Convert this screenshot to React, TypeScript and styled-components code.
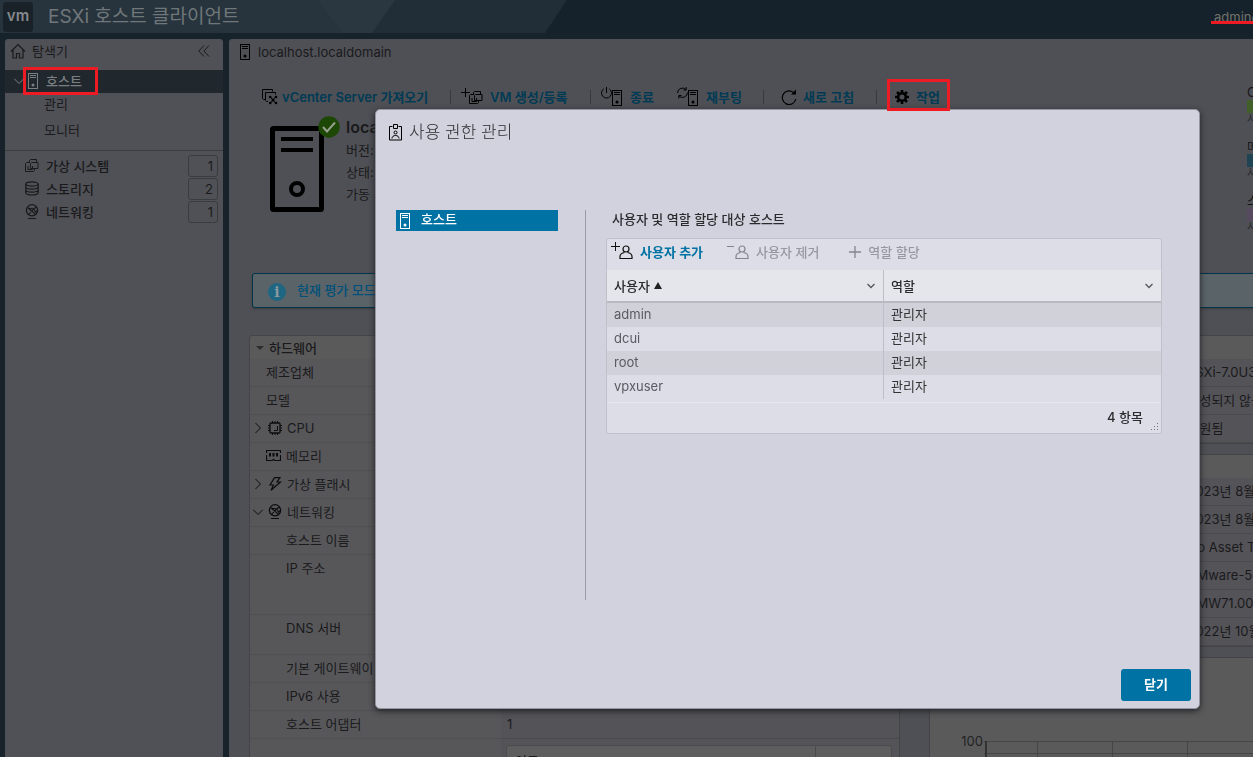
import React from 'react';
import styled, { createGlobalStyle, css } from 'styled-components';

const GlobalStyle = createGlobalStyle`
  * { box-sizing: border-box; }
  html, body, #root { height: 100%; }
  body {
    margin: 0;
    overflow: hidden;
    background: #17222a;
    color: #1a1a1c;
    font: 400 13px/20px Inter, "Noto Sans CJK KR", sans-serif;
  }
  button { font: inherit; color: inherit; background: none; border: 0; padding: 0; text-align: left; cursor: pointer; }
  a { color: inherit; text-decoration: none; }
  h1, h2, h3, p, ul { margin: 0; padding: 0; font-weight: inherit; font-size: inherit; }
  ul { list-style: none; }
  table { border-spacing: 0; }
  svg { display: block; flex: none; }
`;

const RED = '#ed1c24';

/* ---------- icons ---------- */

const Svg = ({ w = 16, h = 16, children }: { w?: number; h?: number; children: React.ReactNode }) => (
  <svg width={w} height={h} viewBox={`0 0 ${w} ${h}`} fill="none" stroke="currentColor" strokeWidth="1" aria-hidden="true">
    {children}
  </svg>
);

const HostShape = () => (
  <g>
    <rect x="0.5" y="0.5" width="9" height="15" />
    <path d="M2 2.500h6M2 4.500h6" />
    <circle cx="5" cy="12" r="1.500" fill="currentColor" stroke="none" />
  </g>
);

const HostIcon = () => (
  <Svg w={11} h={16}><HostShape /></Svg>
);

const HomeIcon = () => (
  <Svg>
    <path d="M1 8.500 8 1.500l7 7M3 7v8h3.500v-4.500h3V15H13V7" strokeWidth="1.200" />
  </Svg>
);

const CollapseIcon = () => (
  <Svg w={12} h={12}>
    <path d="M6 .5.8 6 6 11.500M11 .5 5.800 6l5.200 5.500" />
  </Svg>
);

const Chevron = ({ dir = 'down' }: { dir?: 'down' | 'right' }) => (
  <Svg w={10} h={10}>
    {dir === 'down' ? <path d="M0 2.500 5 7.500l5-5" /> : <path d="M2.500 0 7.500 5l-5 5" />}
  </Svg>
);

const SmallChevron = () => (
  <Svg w={10} h={6}>
    <path d="M1.500 1 5 4.500 8.500 1" strokeWidth="1.300" />
  </Svg>
);

const VmShape = () => (
  <g>
    <path d="M4.500 5V2.500l1-1h6V4" />
    <path d="M9.500 10.500v2l-1 1h-8v-8l1-1h3" />
    <path d="M5.500 10.500v-5l1-1h6.500v6H5.500z" />
    <path d="M3 8v3.500h4.500V8" />
  </g>
);

const VmIcon = () => (
  <Svg w={14} h={15}>
    <VmShape />
  </Svg>
);

const StorageIcon = () => (
  <Svg w={14} h={15}>
    <g strokeWidth="1.200">
      <ellipse cx="7" cy="3" rx="6.200" ry="2.200" />
      <path d="M.8 3v8.800C.8 13 3.500 14 7 14s6.200-1 6.200-2.200V3M.8 6C.8 7.200 3.500 8.200 7 8.200S13.200 7.200 13.200 6M.8 9c0 1.200 2.700 2.200 6.200 2.200s6.200-1 6.200-2.200" />
    </g>
  </Svg>
);

const NetworkIcon = () => (
  <Svg w={14} h={15}>
    <circle cx="7" cy="6.300" r="5.600" strokeWidth="1.300" />
    <path d="M2.500 3.500 9.500 9.500l2.500-3M3.500 10.500 8.500 5l3-2M2.500 4 8.500 5l3 4.500" strokeWidth="1.100" />
    <path d="M3 14.500h8" />
  </Svg>
);

const ImportIcon = () => (
  <Svg>
    <path d="M3 10.500H1.500l-1-1V.5h10v2M6 12.500H4.500l-1-1v-8h10v2" />
    <path d="M8.500 8l5 6M13.500 8l-5 6" />
    <g fill="currentColor" stroke="none">
      <circle cx="8.200" cy="8" r="1.300" /><circle cx="14" cy="8" r="1.300" />
      <circle cx="8.200" cy="14" r="1.300" /><circle cx="14" cy="14" r="1.300" />
      <circle cx="11" cy="11" r="1.500" />
    </g>
  </Svg>
);

const NewVmIcon = () => (
  <Svg w={22} h={18}>
    <path d="M0 4.500h9M4.500 0v9" />
    <g transform="translate(8 2)"><VmShape /></g>
  </Svg>
);

const MiniHost = () => (
  <g transform="translate(11 3)"><HostShape /></g>
);

const ShutdownIcon = () => (
  <Svg w={22} h={20}>
    <path d="M5.500 0v6M2.800 1.800a5 5 0 1 0 5.400 0" />
    <MiniHost />
  </Svg>
);

const RebootIcon = () => (
  <Svg w={22} h={20}>
    <path d="M.5 6a5 5 0 0 1 8.700-3.300V0M9.200 3H6.500M10.500 5.500a5 5 0 0 1-8.700 3.300v2.700M1.800 8.500h2.700" />
    <MiniHost />
  </Svg>
);

const RefreshIcon = () => (
  <Svg>
    <path d="M13.500 4.500A6.800 6.800 0 1 0 14.800 10" strokeWidth="1.200" />
    <path d="M15 .5v5h-5z" fill="currentColor" stroke="none" />
  </Svg>
);

const GearIcon = () => (
  <Svg w={14} h={14}>
    <circle cx="7" cy="7" r="3.800" strokeWidth="2.600" />
    <g strokeWidth="2.600">
      <path d="M7 0v3M7 11v3M0 7h3M11 7h3M2 2l2 2M10 10l2 2M12 2l-2 2M4 10l-2 2" />
    </g>
  </Svg>
);

const BadgeIcon = () => (
  <Svg w={13} h={17}>
    <path d="M3.500 2.500h-3v13.500h12V2.500h-3" />
    <path d="M4.500.5h4v4h-4z" />
    <circle cx="6.500" cy="8.500" r="1.500" />
    <path d="M3 14.500c0-2 1.500-3 3.500-3s3.500 1 3.500 3" />
  </Svg>
);

const UserIcon = ({ sign }: { sign: 'plus' | 'minus' }) => (
  <Svg w={22} h={19}>
    <path d={sign === 'plus' ? 'M0 4.500h9M4.500 0v9' : 'M0 4.500h7'} />
    <circle cx="15" cy="7" r="3" strokeWidth="1.200" />
    <path d="M13.500 10.500c-3 .6-4.500 2-4.500 4v2h12v-2c0-2-1.500-3.400-4.500-4" strokeWidth="1.200" />
  </Svg>
);

const PlusIcon = () => (
  <Svg w={18} h={12}>
    <path d="M6 6h12M12 0v12" strokeWidth="1.300" />
  </Svg>
);

const CpuIcon = () => (
  <Svg w={14} h={14}>
    <rect x="2" y="2" width="10" height="10" rx="1" strokeWidth="1.300" />
    <path d="M9.500 5v4.500H6M4.500 0v2M7 0v2M9.500 0v2M4.500 12v2M7 12v2M9.500 12v2M0 4.500h2M0 7h2M0 9.500h2M12 4.500h2M12 7h2M12 9.500h2" />
  </Svg>
);

const MemoryIcon = () => (
  <Svg w={15} h={11}>
    <path d="M.5 3V.5h14V3M.5 5v5.500H6l1.500-1 1.500 1h5.500V5" strokeWidth="1.200" />
    <path d="M4 3v3.500M7.500 3v3.500M11 3v3.500" strokeWidth="2" />
  </Svg>
);

const FlashIcon = () => (
  <Svg w={14} h={14}>
    <path d="M6.500.7h5.500L9 5h3.500L3 13.300 5.500 8H2z" strokeWidth="1.200" />
  </Svg>
);

/* ---------- shell ---------- */

const Shell = styled.div`
  height: 100vh;
  min-width: 1574px;
  display: flex;
  flex-direction: column;
  overflow: hidden;
`;

const TopBar = styled.header`
  position: relative;
  flex: none;
  height: 39px;
  border-bottom: 6px solid #17232b;
  background: #16222b;
  display: flex;
  align-items: center;
`;

const Facets = styled.svg`
  position: absolute;
  left: 0;
  top: 0;
`;

const Logo = styled.span`
  position: relative;
  width: 30px;
  height: 30px;
  margin: 0 15px 0 3px;
  border-radius: 3px;
  background: #1a2229;
  color: #85898c;
  font: 600 15px/28px Inter, sans-serif;
  text-align: center;
`;

const AppTitle = styled.h1`
  position: relative;
  color: #70777a;
  font-size: 19px;
  line-height: 28px;
`;

const Account = styled.a`
  position: relative;
  width: 360px;
  margin-left: auto;
  color: #74736c;
  line-height: 18px;
  &::after {
    content: '';
    position: absolute;
    left: -3px;
    right: 0;
    bottom: 2px;
    height: 3px;
    background: ${RED};
  }
`;

const Body = styled.div`
  flex: 1;
  min-height: 0;
  display: flex;
  gap: 6px;
  padding: 0 4px 0 5px;
`;

/* ---------- navigator ---------- */

const Navigator = styled.nav`
  flex: none;
  width: 218px;
  border-radius: 3px 3px 0 0;
  background: #505156;
`;

const NavHead = styled.div`
  display: flex;
  align-items: center;
  gap: 6px;
  height: 31px;
  padding: 0 13px 8px 5px;
  button { margin-left: auto; }
`;

const marked = css`
  position: relative;
  &::after {
    content: '';
    position: absolute;
    z-index: 20;
    border: 3px solid ${RED};
    pointer-events: none;
  }
`;

const NavHost = styled.div`
  display: flex;
  align-items: center;
  gap: 4px;
  height: 23px;
  padding: 1px 0 2px 9px;
  background: #20282e;
  color: #7c7f81;
`;

const NavHostLink = styled.a`
  ${marked}
  display: flex;
  align-items: center;
  gap: 7px;
  font-weight: 500;
  &::after { inset: -4px -16px -4px -5px; }
`;

const NavSub = styled.a`
  display: block;
  height: 26px;
  padding-left: 39px;
  line-height: 22px;
`;

const NavSubs = styled.div`
  height: 58px;
  border-bottom: 1px solid #3b3c40;
`;

const NavItems = styled.ul`
  padding: 3px 5px 0 20px;
`;

const NavItem = styled.li`
  display: flex;
  align-items: center;
  gap: 7px;
  height: 23px;
  font-weight: 500;
`;

const Count = styled.span`
  width: 30px;
  height: 22px;
  margin-left: auto;
  padding-right: 4px;
  border: 1px solid #3a3b3f;
  border-radius: 3px;
  font-weight: 400;
  text-align: right;
`;

/* ---------- host page ---------- */

const Main = styled.main`
  flex: 1;
  min-width: 0;
  overflow: hidden;
  border-radius: 3px 3px 0 0;
  background: #4f5055;
`;

const Crumb = styled.div`
  display: flex;
  align-items: center;
  gap: 7px;
  height: 26px;
  padding-left: 11px;
  svg { color: #000; }
`;

const Hero = styled.section`
  display: flex;
  justify-content: space-between;
  height: 208px;
  padding: 18px 20px 0 33px;
`;

const Toolbar = styled.div`
  display: flex;
  height: 28px;
`;

const Tool = styled.button<{ $width: number; $gap?: number; $divided?: boolean; $before?: number }>`
  display: flex;
  align-items: center;
  gap: ${(p) => p.$gap ?? 8}px;
  width: ${(p) => p.$width}px;
  margin-left: ${(p) => p.$before ?? 0}px;
  color: #000;
  white-space: nowrap;
  ${(p) => p.$divided && css`
    background: linear-gradient(#38393d, #38393d) right center / 1px 14px no-repeat;
  `}
`;

const ActionTool = styled(Tool)`
  ${marked}
  &::after { inset: -4px -3px 0 -8px; }
`;

const ToolText = styled.span`
  color: #003a54;
  font-weight: 600;
`;

const HostSummary = styled.div`
  display: flex;
  gap: 12px;
  padding: 4px 0 0 8px;
`;

const HostPicture = styled.svg`
  width: 64px;
  height: 100px;
  margin-top: -2px;
  overflow: visible;
`;

const HostFacts = styled.div`
  line-height: 22px;
  white-space: nowrap;
`;

const HostName = styled.h2`
  font-size: 16px;
  font-weight: 600;
  line-height: 24px;
`;

const Stats = styled.div`
  width: 303px;
  padding-top: 1px;
`;

const Stat = styled.div`
  height: 54px;
  line-height: 16px;
`;

const StatBar = styled.div<{ $color: string }>`
  height: 13px;
  background: ${(p) => p.$color};
`;

const StatName = styled.div`
  color: #151517;
`;

const StatNote = styled.div`
  color: #2a2a2d;
  font-size: 11px;
  line-height: 12px;
`;

const Notice = styled.div`
  display: flex;
  align-items: center;
  gap: 11px;
  height: 35px;
  margin: 0 20px 0 23px;
  padding: 0 0 2px 15px;
  border: 1px solid #00344d;
  border-radius: 3px;
  background: #5a6468;
  color: #00507a;
  font-weight: 500;
  box-shadow: 0 1px 2px #3c3d41;
`;

const InfoDot = styled.span`
  width: 18px;
  height: 18px;
  margin-top: 4px;
  border-radius: 50%;
  background: #1f6683;
  color: #8b9a9f;
  font: 700 14px/18px "DejaVu Serif", serif;
  text-align: center;
`;

const Columns = styled.div`
  display: grid;
  grid-template-columns: 652fr 640fr;
  gap: 29px;
  align-items: start;
  padding: 27px 1px 0 20px;
`;

const Stack = styled.div`
  display: grid;
  gap: 10px;
`;

const Card = styled.section`
  border: 1px solid #434448;
  border-radius: 3px;
  background: #5a5a5b;
`;

const CardHead = styled.h3`
  display: flex;
  align-items: center;
  gap: 5px;
  height: 23px;
  padding-left: 6px;
  font-weight: 500;
`;

const Triangle = styled.span`
  border: 4px solid transparent;
  border-top-color: #2c2c2e;
  border-bottom: 0;
`;

const Facts = styled.table`
  width: 100%;
  table-layout: fixed;
  th, td {
    padding: 0;
    border-bottom: 1px solid #4a4a4d;
    font-weight: 400;
    text-align: left;
    vertical-align: top;
    white-space: nowrap;
  }
  th { width: 251px; border-color: #505052; background: #57575a; }
  td { padding: 3px 6px; background: #545358; }
`;

const FactLabel = styled.div<{ $level: number }>`
  display: flex;
  align-items: center;
  gap: 5px;
  min-height: 25px;
  padding-left: ${(p) => [16, 3, 16, 36][p.$level]}px;
  svg { color: #0c0c0e; }
`;

const FactRow = styled.tr<{ $tall?: number }>`
  height: ${(p) => p.$tall ?? 28}px;
`;

const AdapterTable = styled.table`
  width: 386px;
  margin: 3px 0 0 -1px;
  border: 1px solid #4b4b4e;
  border-radius: 3px;
  background: #5d5d5e;
  && th { width: auto; height: 28px; padding: 5px 8px; border: 0; background: none; font-weight: 500; }
  && th:first-child { width: 309px; border-right: 1px solid #4b4b4e; }
`;

const Chart = styled.svg`
  display: block;
  width: 100%;
  height: 140px;
`;

/* ---------- dialog ---------- */

const Backdrop = styled.div`
  position: fixed;
  inset: 0;
  z-index: 10;
  display: flex;
  align-items: flex-start;
  padding: 109px 53px 0 375px;
`;

const Dialog = styled.section`
  flex: 1;
  display: flex;
  flex-direction: column;
  min-height: 600px;
  padding: 0 8px 7px 13px;
  border: 1px solid #9495a0;
  border-radius: 5px;
  background: #d2d2de;
  color: #2b2b2e;
  box-shadow: 0 2px 6px #202124;
`;

const DialogTitle = styled.h2`
  display: flex;
  align-items: center;
  gap: 7px;
  height: 100px;
  padding-bottom: 56px;
  font-size: 17px;
  font-weight: 300;
  svg { color: #000; }
`;

const DialogBody = styled.div`
  flex: 1;
  display: flex;
  align-items: flex-start;
  padding: 0 29px 0 7px;
`;

const TargetPane = styled.nav`
  flex: none;
  width: 190px;
  height: 390px;
  padding-right: 27px;
  border-right: 1px solid #9b9ba4;
`;

const TargetLink = styled.a`
  display: flex;
  align-items: center;
  gap: 10px;
  height: 21px;
  padding-left: 4px;
  background: #0072a3;
  color: #fff;
  font-weight: 500;
  line-height: 18px;
  svg { margin-top: 1px; }
  span { margin-bottom: 4px; }
`;

const Permissions = styled.div`
  flex: 1;
  min-width: 0;
  margin-left: 20px;
`;

const PermTitle = styled.h3`
  height: 28px;
  padding-left: 6px;
  font-weight: 500;
  line-height: 18px;
`;

const Grid = styled.div`
  position: relative;
  border: 1px solid #bfc0ca;
  border-radius: 3px;
  background: #dddde7;
`;

const GridTools = styled.div`
  display: flex;
  gap: 24px;
  height: 31px;
  padding: 0 0 6px 4px;
`;

const GridTool = styled.button`
  display: flex;
  align-items: center;
  gap: 7px;
  font-weight: 600;
  color: #0072a3;
  svg { color: #111; }
  &:disabled { color: #9799a2; font-weight: 500; }
  &:disabled svg { color: #84858e; }
`;

const GridTable = styled.table`
  width: 100%;
  table-layout: fixed;
  th, td {
    padding: 0 7px;
    text-align: left;
    font-weight: 400;
  }
  th:first-child, td:first-child { width: calc(50% + 1px); border-right: 1px solid #bebec8; }
  thead th { height: 33px; background: #e5e5ec; border-bottom: 2px solid #b9b9c1; font-weight: 500; }
  tbody td { height: 24px; padding-bottom: 2px; line-height: 18px; color: #333336; }
  tbody td:first-child { color: #5a5a60; }
  tbody tr:nth-child(odd) { background: #d1d1d9; }
`;

const HeadCell = styled.button`
  display: flex;
  align-items: center;
  gap: 4px;
  width: 100%;
  svg { margin-left: auto; color: #55565c; }
`;

const Ascending = styled.span`
  border: 4px solid transparent;
  border-bottom: 7px solid #222;
  border-top: 0;
`;

const GridFoot = styled.div`
  height: 31px;
  margin-top: 3px;
  padding-right: 18px;
  border-top: 1px solid #e6e6ee;
  font-weight: 500;
  line-height: 28px;
  text-align: right;
`;

const Grip = styled.svg`
  position: absolute;
  right: 2px;
  bottom: 2px;
`;

const CloseButton = styled.button`
  align-self: flex-end;
  width: 70px;
  height: 32px;
  padding-bottom: 2px;
  border-radius: 3px;
  background: #0072a3;
  color: #fff;
  font-weight: 600;
  text-align: center;
`;

/* ---------- data ---------- */

type Fact = { label: string; value?: string; level?: number; icon?: React.ReactNode; open?: 'down' | 'right'; tall?: number };

const hardware: Fact[] = [
  { label: '제조업체' },
  { label: '모델' },
  { label: 'CPU', level: 1, icon: <CpuIcon />, open: 'right' },
  { label: '메모리', level: 2, icon: <MemoryIcon /> },
  { label: '가상 플래시', level: 1, icon: <FlashIcon />, open: 'right' },
  { label: '네트워킹', level: 1, icon: <NetworkIcon />, open: 'down' },
  { label: '호스트 이름', level: 3 },
  { label: 'IP 주소', level: 3, tall: 60 },
  { label: 'DNS 서버', level: 3, tall: 40 },
  { label: '기본 게이트웨이', level: 3 },
  { label: 'IPv6 사용', level: 3 },
  { label: '호스트 어댑터', level: 3, value: '1' },
];

const config: Fact[] = [
  { label: '', value: 'ESXi-7.0U3' },
  { label: '', value: '구성되지 않음' },
  { label: '', value: '지원됨' },
];

const system: Fact[] = [
  { label: '', value: '2023년 8월' },
  { label: '', value: '2023년 8월' },
  { label: '', value: 'No Asset Tag' },
  { label: '', value: 'VMware-56' },
  { label: '', value: 'VMW71.00V' },
  { label: '', value: '2022년 10월' },
];

const permissions = ['admin', 'dcui', 'root', 'vpxuser'];

const FactRows = ({ rows }: { rows: Fact[] }) => (
  <>
    {rows.map((f, i) => (
      <FactRow key={i} $tall={f.tall}>
        <th scope="row">
          <FactLabel $level={f.level ?? 0}>
            {f.open && <Chevron dir={f.open} />}
            {f.icon}
            {f.label}
          </FactLabel>
        </th>
        <td>{f.value}</td>
      </FactRow>
    ))}
  </>
);

export default function App() {
  return (
    <>
      <GlobalStyle />
      <Shell>
        <TopBar>
          <Facets width="600" height="33" aria-hidden="true">
            <path d="M0 0H567L545 33H0z" fill="#222e37" />
            <path d="M0 0H318L342 33H0z" fill="#27343d" />
            <path d="M318 0H395L372 33H342z" fill="#2a3740" />
          </Facets>
          <Logo>vm</Logo>
          <AppTitle>ESXi 호스트 클라이언트</AppTitle>
          <Account href="#account">admin@</Account>
        </TopBar>
        <Body>
          <Navigator>
            <NavHead>
              <HomeIcon />
              탐색기
              <button aria-label="접기"><CollapseIcon /></button>
            </NavHead>
            <NavHost>
              <Chevron />
              <NavHostLink href="#host"><HostIcon />호스트</NavHostLink>
            </NavHost>
            <NavSubs>
              <NavSub href="#manage">관리</NavSub>
              <NavSub href="#monitor">모니터</NavSub>
            </NavSubs>
            <NavItems>
              <NavItem><VmIcon />가상 시스템<Count>1</Count></NavItem>
              <NavItem><StorageIcon />스토리지<Count>2</Count></NavItem>
              <NavItem><NetworkIcon />네트워킹<Count>1</Count></NavItem>
            </NavItems>
          </Navigator>
          <Main>
            <Crumb><HostIcon />localhost.localdomain</Crumb>
            <Hero>
              <div>
                <Toolbar>
                  <Tool $width={189} $gap={4} $divided><ImportIcon /><ToolText>vCenter Server 가져오기</ToolText></Tool>
                  <Tool $width={130} $before={10} $gap={7} $divided><NewVmIcon /><ToolText>VM 생성/등록</ToolText></Tool>
                  <Tool $width={76} $before={10} $gap={7}><ShutdownIcon /><ToolText>종료</ToolText></Tool>
                  <Tool $width={87} $gap={7} $divided><RebootIcon /><ToolText>재부팅</ToolText></Tool>
                  <Tool $width={96} $before={17} $gap={6} $divided><RefreshIcon /><ToolText>새로 고침</ToolText></Tool>
                  <ActionTool $width={52} $before={18} $gap={7}><GearIcon /><ToolText>작업</ToolText></ActionTool>
                </Toolbar>
                <HostSummary>
                  <HostPicture viewBox="0 0 64 100" aria-hidden="true">
                    <rect x="2.500" y="15.500" width="49" height="81" rx="1" fill="none" stroke="#000" strokeWidth="5" />
                    <path d="M11 26h32M11 37h32" stroke="#000" strokeWidth="4" />
                    <circle cx="27" cy="76" r="6" fill="none" stroke="#000" strokeWidth="4" />
                    <circle cx="59" cy="14" r="10.700" fill="#1c4704" />
                    <path d="M53 14l4 4.500 8-9" fill="none" stroke="#97a08f" strokeWidth="2" />
                  </HostPicture>
                  <HostFacts>
                    <HostName>localhost.localdomain</HostName>
                    <p>버전:</p>
                    <p>상태:</p>
                    <p>가동 시간:</p>
                  </HostFacts>
                </HostSummary>
              </div>
              <Stats>
                <Stat><StatName>CPU</StatName><StatBar $color="#42602a" /><StatNote>사용됨</StatNote></Stat>
                <Stat><StatName>메모리</StatName><StatBar $color="#1f4453" /><StatNote>사용됨</StatNote></Stat>
                <Stat><StatName>스토리지</StatName><StatBar $color="#574a5f" /><StatNote>사용됨</StatNote></Stat>
              </Stats>
            </Hero>
            <Notice><InfoDot>i</InfoDot>현재 평가 모드에서 ESXi를 사용하고 있습니다.</Notice>
            <Columns>
              <Card>
                <CardHead><Triangle />하드웨어</CardHead>
                <Facts>
                  <tbody>
                    <FactRows rows={hardware} />
                    <FactRow $tall={60}>
                      <th aria-label="호스트 어댑터" />
                      <td>
                        <AdapterTable>
                          <thead><tr><th>이름</th><th aria-label="상태" /></tr></thead>
                        </AdapterTable>
                      </td>
                    </FactRow>
                  </tbody>
                </Facts>
              </Card>
              <Stack>
                <Card><CardHead /><Facts><tbody><FactRows rows={config} /></tbody></Facts></Card>
                <Card><CardHead /><Facts><tbody><FactRows rows={system} /></tbody></Facts></Card>
                <Card>
                  <CardHead />
                  <Chart>
                    <path d="M54 60.500H700M54 72.500H700" stroke="#454547" />
                    <path d="M107.500 60v80M182.500 60v80M257.500 60v80" stroke="#454547" />
                    <path d="M56 60v80" stroke="#333335" strokeWidth="2" />
                    <text x="53" y="65" textAnchor="end" fill="#222224" fontSize="13">100</text>
                  </Chart>
                </Card>
              </Stack>
            </Columns>
          </Main>
        </Body>
      </Shell>
      <Backdrop>
        <Dialog role="dialog" aria-label="사용 권한 관리">
          <DialogTitle><BadgeIcon />사용 권한 관리</DialogTitle>
          <DialogBody>
            <TargetPane>
              <TargetLink href="#host"><HostIcon /><span>호스트</span></TargetLink>
            </TargetPane>
            <Permissions>
              <PermTitle>사용자 및 역할 할당 대상 호스트</PermTitle>
              <Grid>
                <GridTools>
                  <GridTool><UserIcon sign="plus" />사용자 추가</GridTool>
                  <GridTool disabled><UserIcon sign="minus" />사용자 제거</GridTool>
                  <GridTool disabled><PlusIcon />역할 할당</GridTool>
                </GridTools>
                <GridTable>
                  <thead>
                    <tr>
                      <th><HeadCell>사용자<Ascending /><SmallChevron /></HeadCell></th>
                      <th><HeadCell>역할<SmallChevron /></HeadCell></th>
                    </tr>
                  </thead>
                  <tbody>
                    {permissions.map((name) => (
                      <tr key={name}><td>{name}</td><td>관리자</td></tr>
                    ))}
                  </tbody>
                </GridTable>
                <GridFoot>4 항목</GridFoot>
                <Grip width="8" height="8" fill="#77787f" aria-hidden="true">
                  <path d="M6 0h1v1H6zM3 3h1v1H3zM6 3h1v1H6zM0 6h1v1H0zM3 6h1v1H3zM6 6h1v1H6z" />
                </Grip>
              </Grid>
            </Permissions>
          </DialogBody>
          <CloseButton>닫기</CloseButton>
        </Dialog>
      </Backdrop>
    </>
  );
}
